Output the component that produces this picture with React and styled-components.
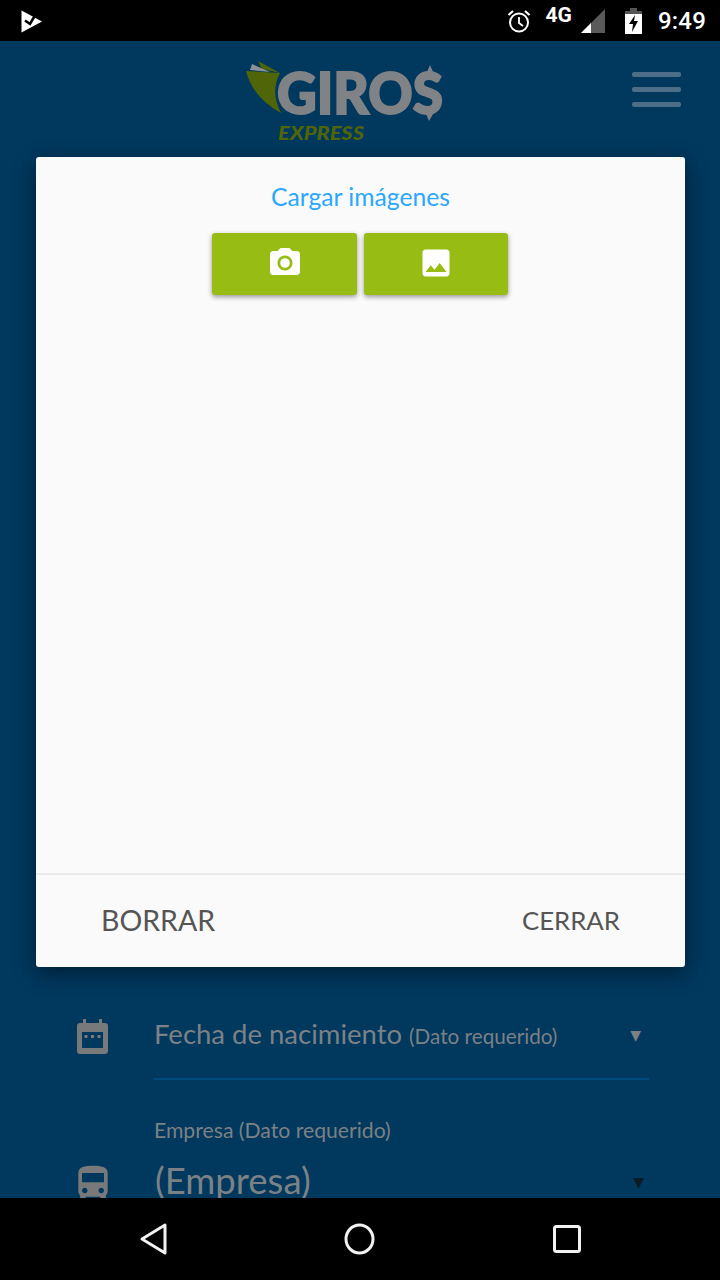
import React from 'react'
import styled, { createGlobalStyle } from 'styled-components'
import { MdPhotoCamera, MdImage, MdDirectionsBus } from 'react-icons/md'

const Global = createGlobalStyle`
  html, body { margin: 0; padding: 0; background: #000; }
  body { font-family: "Lato", "Noto Sans", sans-serif; }
`

const Screen = styled.div`
  position: relative;
  width: 720px;
  height: 1280px;
  display: flex;
  flex-direction: column;
  overflow: hidden;
  background: #00385e;
`

const StatusBar = styled.div`
  height: 41px;
  flex: none;
  background: #000;
  display: flex;
  align-items: center;
  padding: 0 14px 0 19px;
  color: #fff;
`

const StatusRight = styled.div`
  margin-left: auto;
  display: flex;
  align-items: center;
`

const NetworkLabel = styled.span`
  font: 700 21px "Roboto", sans-serif;
  margin: -11px 9px 0 15px;
`

const BatterySlot = styled.span`
  display: flex;
  margin-left: 19px;
`

const Clock = styled.span`
  font: 500 24px "Roboto", sans-serif;
  margin-left: 16px;
  letter-spacing: 0.2px;
`

const Content = styled.div`
  flex: 1;
  min-height: 0;
  overflow: hidden;
`

const Header = styled.header`
  height: 116px;
  display: flex;
  justify-content: space-between;
  padding: 17px 39px 0 245px;
  box-sizing: border-box;
`

const Burger = styled.div`
  width: 49px;
  margin-top: 14px;
  height: 35px;
  display: flex;
  flex-direction: column;
  justify-content: space-between;
`

const BurgerLine = styled.span`
  height: 5px;
  border-radius: 2px;
  background: #4c6e88;
`

const Form = styled.div`
  padding: 851px 71px 0 77px;
`

const Row = styled.div`
  display: flex;
  align-items: flex-start;
  margin-top: ${p => p.$gap || 0}px;
`

const RowIcon = styled.div`
  width: 77px;
  flex: none;
  color: #77797b;
  display: flex;
  padding-top: ${p => p.$top}px;
  margin-left: ${p => p.$shift || 0}px;
  margin-right: ${p => -(p.$shift || 0)}px;
`

const Field = styled.div`
  flex: 1;
  height: 72px;
  display: flex;
  align-items: center;
  justify-content: space-between;
  border-bottom: 2px solid #004a7c;
  box-sizing: border-box;
  padding-bottom: 19px;
  padding-right: 8px;
`

const FieldText = styled.span`
  color: #7b8185;
  font-size: 27.5px;
`

const Hint = styled.span`
  font-size: 20.7px;
`

const Arrow = styled.span`
  font: 14px "DejaVu Sans", sans-serif;
  color: ${p => (p.$dark ? '#0a1a26' : '#7b8185')};
  margin-top: ${p => (p.$dark ? 0 : 3)}px;
`

const FloatLabel = styled.div`
  color: #7b8185;
  font-size: 21.2px;
  line-height: 24px;
  margin: 38px 0 0 77px;
`

const SelectField = styled.div`
  flex: 1;
  height: 46px;
  display: flex;
  align-items: center;
  justify-content: space-between;
  padding: 0 5px 0 1px;
`

const SelectText = styled.span`
  color: #7b8185;
  font-size: 36.5px;
  line-height: 42px;
  margin-bottom: 5px;
`

const NavBar = styled.nav`
  height: 82px;
  flex: none;
  background: #000;
  display: flex;
  align-items: center;
  padding: 0 138px 0 139px;
  justify-content: space-between;
`

const Modal = styled.section`
  position: absolute;
  left: 36px;
  top: 157px;
  width: 649px;
  height: 810px;
  background: #fafafa;
  border-radius: 3px;
  box-shadow: 0 6px 22px rgba(0, 0, 0, 0.45);
  display: flex;
  flex-direction: column;
`

const ModalBody = styled.div`
  flex: 1;
  padding-top: 25px;
  display: flex;
  flex-direction: column;
  align-items: center;
`

const ModalTitle = styled.h2`
  margin: 0;
  font-size: 24.7px;
  line-height: 30px;
  font-weight: 400;
  color: #2aa8ff;
`

const ButtonRow = styled.div`
  margin-top: 21px;
  display: flex;
  gap: 7px;
  margin-right: 1px;
`

const GreenButton = styled.button`
  width: ${p => p.$width}px;
  height: 62px;
  border: 0;
  padding: 0 0 3px;
  border-radius: 3px;
  background: #97bd14;
  color: #fff;
  box-shadow: 0 2px 5px rgba(0, 0, 0, 0.4);
  display: flex;
  align-items: center;
  justify-content: center;
`

const ModalFooter = styled.div`
  height: 94px;
  flex: none;
  border-top: 2px solid #ececec;
  box-sizing: border-box;
  display: flex;
  align-items: center;
  justify-content: space-between;
  padding: 0 65px 3px;
`

const FooterAction = styled.span`
  color: #555;
  font-size: ${p => p.$size}px;
`

const Logo = () => (
  <svg width="200" height="86" viewBox="245 58 200 86" style={{ overflow: 'visible' }}>
    <path d="M246 71 L280 73 Q270 92 281 113 Q253 98 246 71Z" fill="#4f6508" />
    <path d="M258 61 L280 73 L262 69Z" fill="#4f6508" />
    <path d="M252 64 L270 72 L250 70Z" fill="#8d9094" />
    <text x="277" y="114" fontFamily="Lato, sans-serif" fontWeight="900" fontSize="57" fill="#808386" stroke="#808386" strokeWidth="2" textLength="166" lengthAdjust="spacingAndGlyphs">GIROS</text>
    <path d="M430 65 L434 74 L427 72Z M429 121 L426 114 L433 114Z" fill="#808386" />
    <text x="278" y="140" fontFamily="Lato, sans-serif" fontWeight="900" fontStyle="italic" fontSize="19" fill="#4f6508" textLength="86" lengthAdjust="spacingAndGlyphs">EXPRESS</text>
  </svg>
)

const NotifyIcon = () => (
  <svg width="24" height="24" viewBox="0 0 24 24">
    <path d="M2.5 1.5 L23 12.5 L2.5 23.5Z" fill="#fff" />
    <path d="M6 11.5 L11 15 L18 3" fill="none" stroke="#000" strokeWidth="2.6" />
  </svg>
)

const AlarmIcon = () => (
  <svg width="24" height="24" viewBox="0 0 24 24" fill="none" stroke="#fff">
    <circle cx="12" cy="13.5" r="9" strokeWidth="2" />
    <path d="M12 8 V14 L16 17" strokeWidth="1.8" />
    <path d="M1.5 6 L6 2 M22.5 6 L18 2" strokeWidth="2.2" />
  </svg>
)

const SignalIcon = () => (
  <svg width="25" height="25" viewBox="0 0 25 25">
    <path d="M24 1 V25 H0Z" fill="#5a5a5a" />
    <path d="M10 15 V25 H0Z" fill="#fff" />
  </svg>
)

const BatteryIcon = () => (
  <svg width="17" height="26" viewBox="0 0 17 26">
    <path d="M5 0 H12 V3 H17 V26 H0 V3 H5Z" fill="#fff" />
    <path d="M5 0 H12 V3 H17 V6 H0 V3 H5Z" fill="#555" />
    <path d="M10 7 L4 16 H8 L7 24 L13 13 H9Z" fill="#000" />
  </svg>
)

const CalendarIcon = () => (
  <svg width="31" height="35" viewBox="0 0 31 35">
    <path d="M6 0 H9 V4 H22 V0 H25 V4 H28 Q31 4 31 7 V32 Q31 35 28 35 H3 Q0 35 0 32 V7 Q0 4 3 4 H6Z" fill="#77797b" />
    <rect x="5" y="13" width="21" height="16" fill="#00385e" />
    <path d="M7.5 16 h3 v3 h-3Z M14 16 h3 v3 h-3Z M20.5 16 h3 v3 h-3Z" fill="#77797b" />
  </svg>
)

const BackIcon = () => (
  <svg width="28" height="34" viewBox="0 0 28 34">
    <path d="M26 3 V31 L3 17Z" fill="none" stroke="#f2f2f2" strokeWidth="3" strokeLinejoin="round" />
  </svg>
)

const HomeIcon = () => (
  <svg width="32" height="34" viewBox="0 0 32 34">
    <ellipse cx="15.5" cy="17" rx="13.5" ry="14" fill="none" stroke="#f2f2f2" strokeWidth="3" />
  </svg>
)

const SquareIcon = () => (
  <svg width="30" height="30" viewBox="0 0 30 30">
    <rect x="2.5" y="2.5" width="25" height="25" rx="2" fill="none" stroke="#f2f2f2" strokeWidth="3" />
  </svg>
)

export default function App() {
  return (
    <Screen>
      <Global />
      <StatusBar>
        <NotifyIcon />
        <StatusRight>
          <AlarmIcon />
          <NetworkLabel>4G</NetworkLabel>
          <SignalIcon />
          <BatterySlot><BatteryIcon /></BatterySlot>
          <Clock>9:49</Clock>
        </StatusRight>
      </StatusBar>

      <Content>
        <Header>
          <Logo />
          <Burger>
            <BurgerLine />
            <BurgerLine />
            <BurgerLine />
          </Burger>
        </Header>
        <Form>
          <Row>
            <RowIcon $top={11}><CalendarIcon /></RowIcon>
            <Field>
              <FieldText>Fecha de nacimiento <Hint>(Dato requerido)</Hint></FieldText>
              <Arrow>▼</Arrow>
            </Field>
          </Row>
          <FloatLabel>Empresa (Dato requerido)</FloatLabel>
          <Row $gap={17}>
            <RowIcon $top={3} $shift={-6}><MdDirectionsBus size={44} /></RowIcon>
            <SelectField>
              <SelectText>(Empresa)</SelectText>
              <Arrow $dark>▼</Arrow>
            </SelectField>
          </Row>
        </Form>
      </Content>

      <NavBar>
        <BackIcon />
        <HomeIcon />
        <SquareIcon />
      </NavBar>

      <Modal>
        <ModalBody>
          <ModalTitle>Cargar imágenes</ModalTitle>
          <ButtonRow>
            <GreenButton $width={145}><MdPhotoCamera size={36} /></GreenButton>
            <GreenButton $width={144}><MdImage size={36} /></GreenButton>
          </ButtonRow>
        </ModalBody>
        <ModalFooter>
          <FooterAction $size={28.5}>BORRAR</FooterAction>
          <FooterAction $size={25.8}>CERRAR</FooterAction>
        </ModalFooter>
      </Modal>
    </Screen>
  )
}
